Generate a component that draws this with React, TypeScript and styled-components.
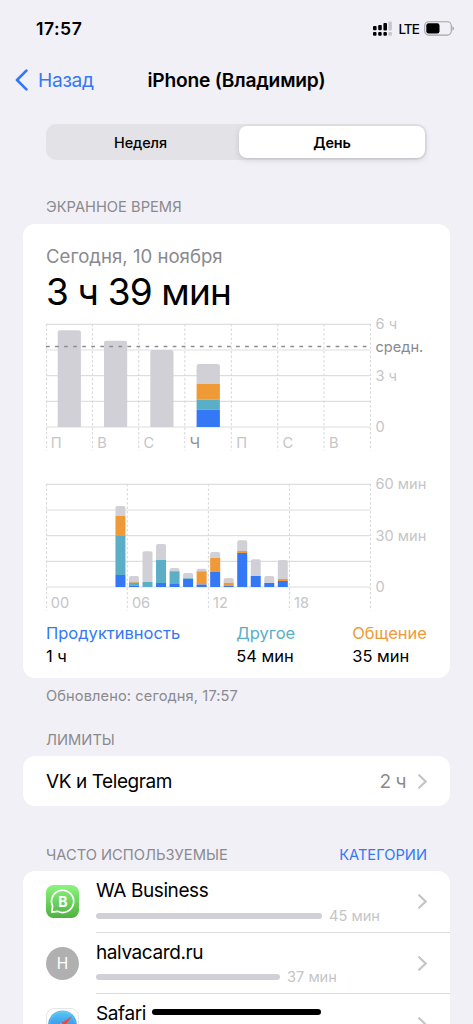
import React from "react";
import styled, { createGlobalStyle } from "styled-components";

const colors = {
  page: "#f1f0f6",
  card: "#ffffff",
  blue: "#3478f6",
  teal: "#5aaec6",
  orange: "#f09a37",
  bar: "#d1d0d6",
  grid: "#dededf",
  muted: "#8a8a8e",
  faint: "#c5c5c7",
};

const GlobalStyle = createGlobalStyle`
  body {
    margin: 0;
    background: ${colors.page};
  }
`;

const Screen = styled.div`
  width: 473px;
  height: 1024px;
  overflow: hidden;
  background: ${colors.page};
  color: #000;
  font-family: Inter, "Liberation Sans", sans-serif;
  white-space: nowrap;
`;

const StatusBar = styled.header`
  display: flex;
  align-items: center;
  justify-content: space-between;
  height: 57px;
  padding: 0 19px 0 36px;
`;

const Time = styled.span`
  font-size: 17.6px;
  font-weight: 600;
  letter-spacing: 0.5px;
`;

const StatusIcons = styled.div`
  display: flex;
  align-items: center;
`;

const Carrier = styled.span`
  margin: 0 5px 0 6px;
  font-size: 13.5px;
  font-weight: 500;
  letter-spacing: -0.9px;
`;

const NavBar = styled.nav`
  display: grid;
  grid-template-columns: 1fr auto 1fr;
  align-items: center;
  height: 46px;
  padding: 0 15px;
`;

const BackLink = styled.a`
  display: flex;
  align-items: center;
  gap: 9px;
  height: 24px;
  color: ${colors.blue};
  font-size: 19.2px;
  line-height: 22px;
  letter-spacing: -0.3px;
`;

const Title = styled.h1`
  margin: 0;
  font-size: 19.2px;
  font-weight: 600;
  line-height: 24px;
  letter-spacing: -0.2px;
`;

const Segmented = styled.div`
  display: flex;
  box-sizing: border-box;
  height: 36px;
  margin: 21px 46px 0;
  padding: 2px;
  border-radius: 10px;
  background: #e3e2e7;
`;

const Segment = styled.button<{ $active?: boolean }>`
  flex: ${({ $active }) => ($active ? "0 0 186px" : 1)};
  padding: 0;
  border: 0;
  border-radius: 8px;
  background: ${({ $active }) => ($active ? "#fff" : "transparent")};
  box-shadow: ${({ $active }) =>
    $active ? "0 2px 6px rgba(0, 0, 0, 0.12), 0 1px 1px rgba(0, 0, 0, 0.04)" : "none"};
  color: #000;
  font-family: inherit;
  font-size: 14.4px;
  font-weight: ${({ $active }) => ($active ? 600 : 500)};
  letter-spacing: -0.1px;
  text-indent: ${({ $active }) => ($active ? 0 : -6)}px;
`;

const SectionHeader = styled.div<{ $top: number }>`
  display: flex;
  justify-content: space-between;
  margin: ${({ $top }) => $top}px 46px 0;
  color: ${colors.muted};
  font-size: 14.7px;
  line-height: 20px;
  text-transform: uppercase;
`;

const SectionLink = styled.a`
  color: ${colors.blue};
`;

const Card = styled.section`
  margin: 6.5px 23px 0;
  border-radius: 12px;
  background: ${colors.card};
`;

const UsageCard = styled(Card)`
  display: flex;
  flex-direction: column;
  box-sizing: border-box;
  height: 454.5px;
  padding: 19px 23px 0;
`;

const DateLabel = styled.div`
  color: ${colors.muted};
  font-size: 18.6px;
  line-height: 26px;
`;

const Total = styled.div`
  font-size: 37px;
  line-height: 45px;
  letter-spacing: -0.85px;
`;

const Chart = styled.svg`
  display: block;
  margin-top: 2.5px;
  overflow: visible;
  font-size: 14.6px;
`;

const HourlyChart = styled(Chart)`
  margin-top: 18px;
`;

const Legend = styled.div`
  display: flex;
  justify-content: space-between;
  margin-top: 9.5px;
  font-size: 16.5px;
  line-height: 23px;
`;

const LegendItem = styled.div``;

const LegendName = styled.div<{ $color: string }>`
  color: ${({ $color }) => $color};
`;

const LegendGroup = styled.div`
  display: flex;
  gap: 57px;
`;

const Updated = styled.p`
  margin: 8px 46px 0;
  color: ${colors.muted};
  font-size: 14.6px;
  line-height: 20px;
  letter-spacing: 0.12px;
`;

const LimitCard = styled(Card)`
  display: flex;
  align-items: center;
  height: 50px;
  padding: 0 23px;
  font-size: 19px;
`;

const LimitName = styled.span`
  flex: 1;
  letter-spacing: -0.42px;
`;

const LimitValue = styled.span`
  margin-right: 12px;
  color: ${colors.muted};
  letter-spacing: -0.5px;
`;

const AppRow = styled.div`
  display: flex;
  height: 61.7px;
  padding-left: 23px;
`;

const AppIcon = styled.svg`
  flex: none;
  margin-top: 14px;
`;

const AppBody = styled.div`
  display: flex;
  flex: 1;
  align-items: center;
  box-sizing: border-box;
  margin-left: 17px;
  padding-right: 23px;
  border-bottom: 1px solid #dddde0;
`;

const AppInfo = styled.div`
  flex: 1;
  align-self: flex-start;
  padding-top: 7px;
`;

const AppName = styled.div`
  display: flex;
  align-items: center;
  gap: 6px;
  font-size: 19px;
  line-height: 25px;
  letter-spacing: -0.4px;
`;

const Usage = styled.div`
  display: flex;
  align-items: center;
  gap: 7px;
  height: 25px;
  color: ${colors.faint};
  font-size: 14.6px;
`;

const UsageBar = styled.div`
  height: 6px;
  border-radius: 3px;
  background: ${colors.bar};
`;

const Stroke = styled.div`
  width: 169px;
  height: 6px;
  margin-top: -3px;
  border-radius: 3px;
  background: #000;
`;

function Chevron() {
  return (
    <svg width="9" height="15" viewBox="0 0 9 15" fill="none">
      <path d="M1.2 1.2 7.6 7.5 1.2 13.8" stroke={colors.faint} strokeWidth="2.2" strokeLinecap="round" />
    </svg>
  );
}

type Part = { top: number; color: string };
type Bar = { x: number; width: number; parts: Part[] };

const { blue, teal, orange, bar: gray } = colors;

// parts go from the top of a bar down, each ends where the next one starts
const bar = (x: number, width: number, ...parts: [number, string][]): Bar => ({
  x,
  width,
  parts: parts.map(([top, color]) => ({ top, color })),
});

const hour = (h: number, ...parts: [number, string][]) => bar(1.8 + h * 13.53, 10, ...parts);

const days: Bar[] = [
  bar(11.7, 23.2, [14.3, gray]),
  bar(58, 23.2, [24.7, gray]),
  bar(104.3, 23.2, [34, gray]),
  bar(150.6, 23.3, [48, gray], [68, orange], [83.4, teal], [93.7, blue]),
];

const hours: Bar[] = [
  hour(5, [30, gray], [40, orange], [60, teal], [99, blue]),
  hour(6, [100, gray], [105.8, orange], [106.7, teal], [109.4, blue]),
  hour(7, [75.3, gray], [106, teal]),
  hour(8, [68, gray], [84, teal], [107, blue]),
  hour(9, [92, gray], [95.3, teal], [108, blue]),
  hour(10, [97, gray], [102.3, teal], [103, blue]),
  hour(11, [92.7, gray], [95.3, orange], [108.5, blue]),
  hour(12, [76, gray], [82, orange], [96, blue]),
  hour(13, [102, gray], [106.7, orange], [109.7, blue]),
  hour(14, [64.3, gray], [75, orange], [77, blue]),
  hour(15, [83.3, gray], [100, blue]),
  hour(16, [100, gray], [107, blue]),
  hour(17, [84, gray], [103, orange], [105, blue]),
];

const BASE = 111;
const LEVELS = [8.3, 34, 59.7, 85.3, BASE];

function ChartGrid({ columns, bottom }: { columns: number[]; bottom: number }) {
  return (
    <>
      {LEVELS.map((y) => (
        <line key={y} x1="0" x2="324.5" y1={y} y2={y} stroke={colors.grid} strokeWidth="1.2" />
      ))}
      {columns.map((x) => (
        <line
          key={x}
          x1={x}
          x2={x}
          y1="8"
          y2={bottom}
          stroke="#dadadc"
          strokeWidth="1.1"
          strokeDasharray="2.6 1.9"
        />
      ))}
    </>
  );
}

function Bars({ data, radius }: { data: Bar[]; radius: number }) {
  return (
    <>
      {data.map(({ x, width, parts }) => (
        <g key={x}>
          {parts.map(({ top, color }, i) => {
            const end = parts[i + 1]?.top ?? BASE;
            const r = i === 0 ? Math.min(radius, end - top) : 0;
            return (
              <path
                key={top}
                fill={color}
                d={`M${x} ${end}V${top + r}q0 ${-r} ${r} ${-r}h${width - 2 * r}q${r} 0 ${r} ${r}V${end}z`}
              />
            );
          })}
        </g>
      ))}
    </>
  );
}

const dayLines = [0.5, 46.5, 92.7, 138.8, 185.3, 231.7, 278, 324.5];
const dayNames = ["П", "В", "С", "Ч", "П", "С", "В"];
const hourLines = [0.5, 81.3, 162.4, 243.5, 324.5];

function WeekChart() {
  return (
    <Chart width="381" height="140" viewBox="0 0 381 140">
      <ChartGrid columns={dayLines} bottom={134.5} />
      <Bars data={days} radius={2.2} />
      <line x1="0" x2="324.5" y1="30.6" y2="30.6" stroke="#8d8d91" strokeWidth="1.5" strokeDasharray="3.7 5.35" />
      {dayNames.map((name, i) => (
        <text key={i} x={4.8 + i * 46.35} y="132.3" fill={i === 3 ? colors.muted : colors.faint}>
          {name}
        </text>
      ))}
      <g fill={colors.faint}>
        <text x="329.5" y="13.3">6 ч</text>
        <text x="329.5" y="65">3 ч</text>
        <text x="329.5" y="116.3">0</text>
      </g>
      <text x="329.5" y="36" fill={colors.muted}>средн.</text>
    </Chart>
  );
}

function DayChart() {
  return (
    <HourlyChart width="381" height="138" viewBox="0 -2 381 138">
      <ChartGrid columns={hourLines} bottom={134.5} />
      <Bars data={hours} radius={2} />
      <g fill={colors.faint}>
        {["00", "06", "12", "18"].map((label, i) => (
          <text key={label} x={4.8 + i * 81.1} y="132.3">
            {label}
          </text>
        ))}
        <text x="329.5" y="13.3">60 мин</text>
        <text x="329.5" y="65">30 мин</text>
        <text x="329.5" y="116.3">0</text>
      </g>
    </HourlyChart>
  );
}

function SignalIcon() {
  return (
    <svg width="19" height="15" viewBox="0 0 19 15">
      <rect x="0" y="5" width="3.6" height="4.2" rx="1" />
      <rect x="5.2" y="4" width="3.6" height="5.2" rx="1" />
      <rect x="10.4" y="2" width="3.6" height="7.4" rx="1" />
      <rect x="15.4" y="0.6" width="3.4" height="8.8" rx="1" fill="#c6c5ca" />
      {[0, 5.2, 10.4, 15.4].map((x, i) => (
        <rect key={x} x={x} y="11" width="3.5" height="3.8" rx="1" fill={i === 3 ? "#c6c5ca" : "#000"} />
      ))}
    </svg>
  );
}

function BatteryIcon() {
  return (
    <svg width="30" height="15" viewBox="0 0 30 15">
      <rect x="0.7" y="0.7" width="26.6" height="13.4" rx="4" fill="none" stroke="#a4a3a8" strokeWidth="1.1" />
      <rect x="2.3" y="2.3" width="13.2" height="10.2" rx="2.3" />
      <path d="M28.4 5.2c2 .8 2 3.7 0 4.5z" fill="#a4a3a8" />
    </svg>
  );
}

function BusinessIcon() {
  return (
    <AppIcon width="33" height="33" viewBox="0 0 33 33">
      <defs>
        <linearGradient id="wa" x1="0" y1="0" x2="0" y2="1">
          <stop offset="0" stopColor="#8cf57f" />
          <stop offset="1" stopColor="#4fb03f" />
        </linearGradient>
      </defs>
      <rect width="33" height="33" rx="7.5" fill="url(#wa)" />
      <path
        d="M5.8 27.2 6.6 21.2A11.1 11.1 0 1 1 11.6 26.3z"
        fill="none"
        stroke="#fff"
        strokeWidth="1.7"
        strokeLinejoin="round"
      />
      <text x="17" y="21.6" fill="#fff" fontSize="14" fontWeight="700" textAnchor="middle">
        B
      </text>
    </AppIcon>
  );
}

function SiteIcon() {
  return (
    <AppIcon width="33" height="33" viewBox="0 0 33 33">
      <circle cx="16.5" cy="16.5" r="16.5" fill="#b0b0b1" />
      <text x="16.5" y="22" fill="#fff" fontSize="15.4" textAnchor="middle">
        H
      </text>
    </AppIcon>
  );
}

function SafariIcon() {
  return (
    <AppIcon width="33" height="33" viewBox="0 0 33 33">
      <defs>
        <linearGradient id="safari" x1="0" y1="0" x2="0" y2="1">
          <stop offset="0" stopColor="#5ac8f5" />
          <stop offset="1" stopColor="#1e6fe0" />
        </linearGradient>
      </defs>
      <rect x="0.5" y="0.5" width="32" height="32" rx="7.5" fill="#fff" stroke="#e6e6e8" />
      <circle cx="16.5" cy="16.8" r="14.4" fill="url(#safari)" />
      <circle cx="16.5" cy="16.8" r="12.8" fill="none" stroke="#8fd3f8" strokeWidth="1.2" strokeDasharray="0.5 1.3" />
      <path d="M26.4 8 15 15.2l3.2 3.2z" fill="#f0483e" />
      <path d="M6.6 25.6 15 15.2l3.2 3.2z" fill="#fff" />
    </AppIcon>
  );
}

export default function App() {
  return (
    <Screen>
      <GlobalStyle />
      <StatusBar>
        <Time>17:57</Time>
        <StatusIcons>
          <SignalIcon />
          <Carrier>LTE</Carrier>
          <BatteryIcon />
        </StatusIcons>
      </StatusBar>
      <NavBar>
        <BackLink>
          <svg width="14" height="22" viewBox="0 0 14 22" fill="none">
            <path d="M11.4 1.6 2 11l9.4 9.4" stroke={colors.blue} strokeWidth="2.7" strokeLinecap="round" strokeLinejoin="round" />
          </svg>
          Назад
        </BackLink>
        <Title>iPhone (Владимир)</Title>
      </NavBar>

      <Segmented>
        <Segment>Неделя</Segment>
        <Segment $active>День</Segment>
      </Segmented>

      <SectionHeader $top={37}>Экранное время</SectionHeader>
      <UsageCard>
        <DateLabel>Сегодня, 10 ноября</DateLabel>
        <Total>3 ч 39 мин</Total>
        <WeekChart />
        <DayChart />
        <Legend>
          <LegendItem>
            <LegendName $color={blue}>Продуктивность</LegendName>1 ч
          </LegendItem>
          <LegendGroup>
            <LegendItem>
              <LegendName $color={teal}>Другое</LegendName>54 мин
            </LegendItem>
            <LegendItem>
              <LegendName $color={orange}>Общение</LegendName>35 мин
            </LegendItem>
          </LegendGroup>
        </Legend>
      </UsageCard>
      <Updated>Обновлено: сегодня, 17:57</Updated>

      <SectionHeader $top={23.5}>Лимиты</SectionHeader>
      <LimitCard>
        <LimitName>VK и Telegram</LimitName>
        <LimitValue>2 ч</LimitValue>
        <Chevron />
      </LimitCard>

      <SectionHeader $top={38.5}>
        Часто используемые
        <SectionLink>Категории</SectionLink>
      </SectionHeader>
      <Card>
        <AppRow>
          <BusinessIcon />
          <AppBody>
            <AppInfo>
              <AppName>WA Business</AppName>
              <Usage>
                <UsageBar style={{ width: 226 }} />
                45 мин
              </Usage>
            </AppInfo>
            <Chevron />
          </AppBody>
        </AppRow>
        <AppRow>
          <SiteIcon />
          <AppBody>
            <AppInfo>
              <AppName>halvacard.ru</AppName>
              <Usage>
                <UsageBar style={{ width: 184 }} />
                37 мин
              </Usage>
            </AppInfo>
            <Chevron />
          </AppBody>
        </AppRow>
        <AppRow>
          <SafariIcon />
          <AppBody>
            <AppInfo>
              <AppName>
                Safari
                <Stroke />
              </AppName>
            </AppInfo>
            <Chevron />
          </AppBody>
        </AppRow>
      </Card>
    </Screen>
  );
}
